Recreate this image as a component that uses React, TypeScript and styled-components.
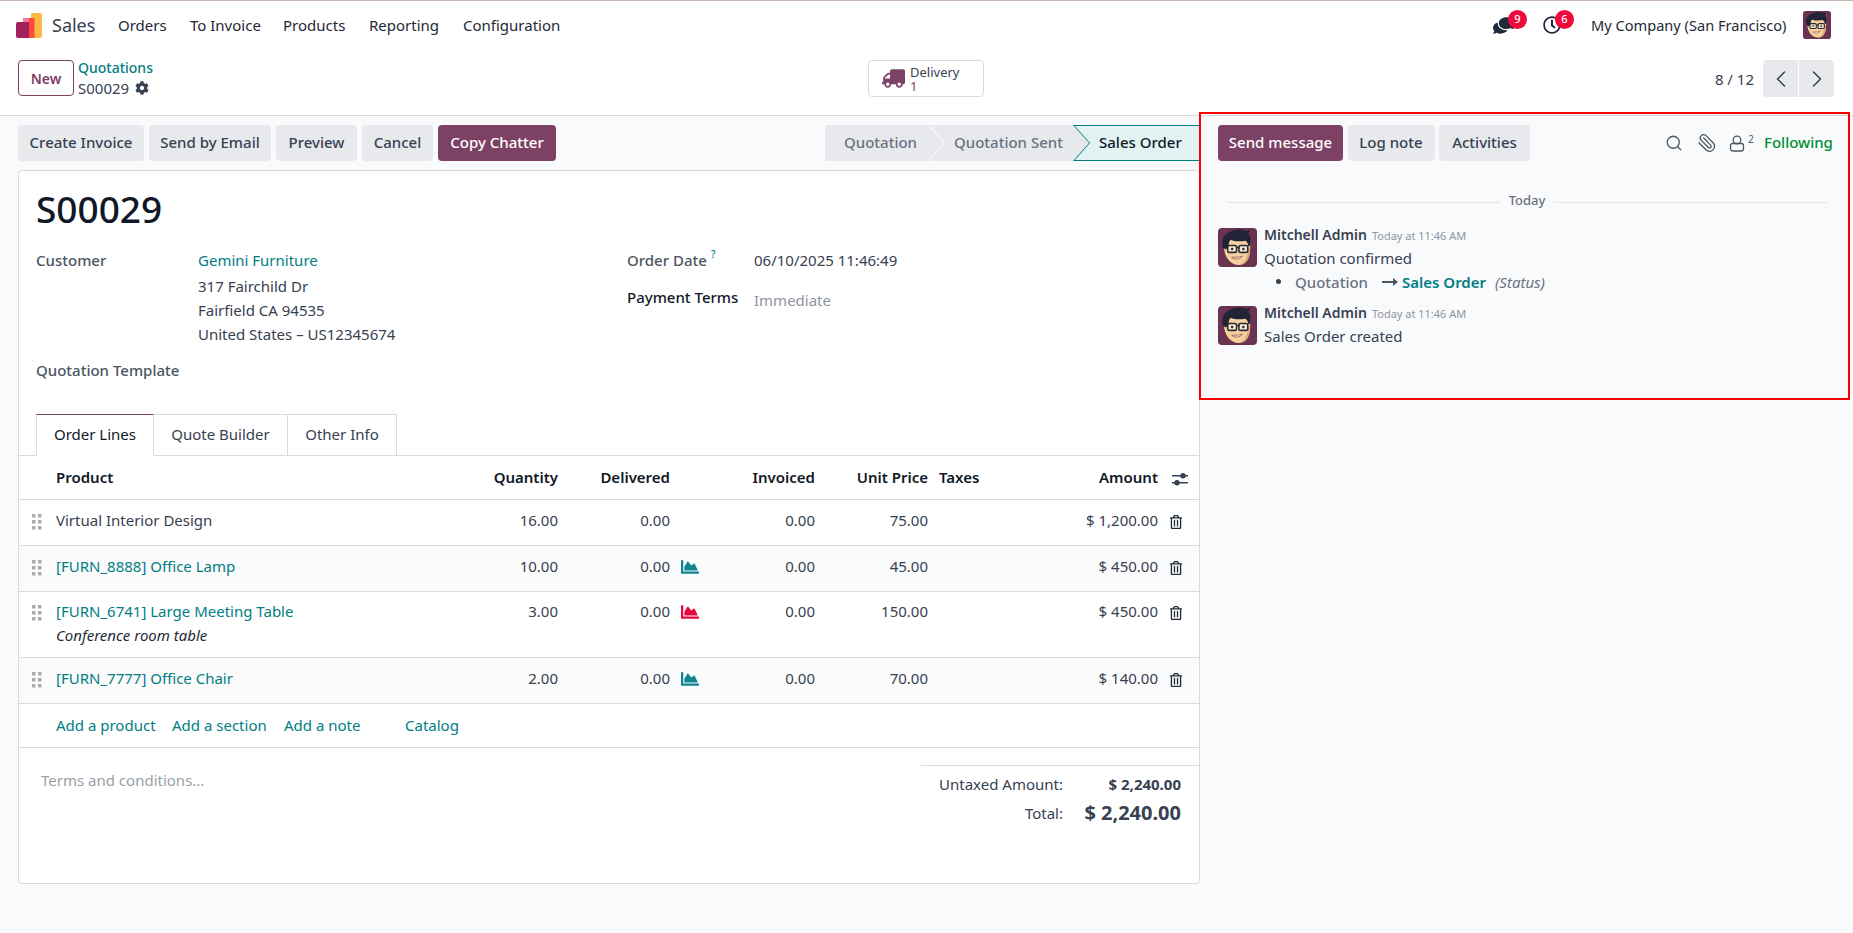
import styled, { createGlobalStyle } from 'styled-components';
import { ChevronLeft, ChevronRight, Paperclip, Search } from 'lucide-react';
import { FaChartArea, FaCog, FaComments, FaRegClock, FaRegTrashAlt, FaTruck } from 'react-icons/fa';

const GlobalStyle = createGlobalStyle`
  html, body {
    margin: 0;
    height: 100%;
    background: #f9fafb;
    color: #374151;
    font-family: "Noto Sans", "Open Sans", sans-serif;
    font-size: 15px;
    line-height: 24px;
    overflow: hidden;
  }
  * { box-sizing: border-box; }
`;

const TEAL = '#017e84';
const PLUM = '#7c4164';

function Logo() {
  return (
    <svg width="26" height="26" viewBox="0 0 26 26">
      <path d="M15 3a2 2 0 0 1 2-2h7a2 2 0 0 1 2 2v21a2 2 0 0 1-2 2h-9z" fill="#fbb945" />
      <path d="M7 8a2 2 0 0 1 2-2h9.500v20H7z" fill="#fc4a3f" />
      <path d="M7 6h6v5H7z" fill="#f8799a" />
      <path d="M0 12a2 2 0 0 1 2-2h11v16H2a2 2 0 0 1-2-2z" fill="#a3205f" />
    </svg>
  );
}

function Face({ size }: { size: number }) {
  return (
    <svg width={size} height={size} viewBox="0 0 40 40" style={{ display: 'block', flex: 'none' }}>
      <rect width="40" height="40" rx="4" fill="#6a3350" />
      <path d="M6 18c0 12 7 20 15 20s12-7 12-17V12H9z" fill="#f6cf9e" />
      <path d="M31 20c0 9-4 17-10 18 8 0 12-7 12-17z" fill="#dfa878" />
      <path d="M5 20C3 12 6 6 12 4c6-3 12-3 16-1l5-1-2 4c3 3 3 8 2 12l-2 1c0-3-1-5-3-6-5 1-11 1-15-1-2 2-2 4-2 7l-3 3z" fill="#232338" />
      <rect x="10" y="18" width="9" height="7" rx="1.500" fill="#f6e8d2" stroke="#2b2b35" strokeWidth="1.600" />
      <rect x="21.500" y="18" width="9" height="7" rx="1.500" fill="#f6e8d2" stroke="#2b2b35" strokeWidth="1.600" />
      <path d="M19 20h3" stroke="#2b2b35" strokeWidth="1.500" />
      <circle cx="14.500" cy="21.500" r="1.300" fill="#2b2b35" />
      <circle cx="26" cy="21.500" r="1.300" fill="#2b2b35" />
      <path d="M14 30c3 2.500 8 2.500 11-1-3 1-8 1-11 1z" fill="#fff" stroke="#8a4b34" strokeWidth=".8" />
    </svg>
  );
}

function DragHandle() {
  return (
    <svg width="10" height="16" viewBox="0 0 10 16" fill="#a9acb2">
      {[0, 6, 12].map((y) => (
        <g key={y}>
          <rect x="0" y={y} width="3.500" height="3.500" />
          <rect x="6" y={y} width="3.500" height="3.500" />
        </g>
      ))}
    </svg>
  );
}

function AdjustIcon() {
  return (
    <svg width="16" height="14" viewBox="0 0 16 14" fill="#374151">
      <rect x="0" y="3" width="16" height="1.500" />
      <rect x="0" y="10" width="16" height="1.500" />
      <circle cx="11" cy="3.700" r="2.700" />
      <circle cx="5" cy="10.700" r="2.700" />
    </svg>
  );
}

function UserOutline() {
  return (
    <svg width="16" height="17" viewBox="0 0 16 17" fill="none" stroke="#4b5563" strokeWidth="1.300">
      <circle cx="8" cy="5" r="3.800" />
      <path d="M3.500 8.500h9a2 2 0 0 1 2 2v3a2.500 2.500 0 0 1-2.500 2.500H4a2.500 2.500 0 0 1-2.500-2.500v-3a2 2 0 0 1 2-2z" />
    </svg>
  );
}

function LongArrow() {
  return (
    <svg width="16" height="8" viewBox="0 0 16 8" fill="#4b5563">
      <path d="M0 3h11V0l5 4-5 4V5H0z" />
    </svg>
  );
}

const Page = styled.div`
  height: 933px;
  display: flex;
  flex-direction: column;
`;

const Navbar = styled.header`
  height: 46px;
  flex: none;
  background: #fff;
  border-top: 1px solid #c9b8ae;
  display: flex;
  align-items: center;
  padding: 3px 22px 0 16px;
`;

const Brand = styled.span`
  font-size: 18px;
  margin-left: 10px;
  width: 66px;
  color: #374151;
`;

const NavItem = styled.span<{ $w: number }>`
  width: ${(p) => p.$w}px;
  color: #1f2937;
  white-space: nowrap;
`;

const NavRight = styled.div`
  margin-left: auto;
  display: flex;
  align-items: center;
`;

const IconBadge = styled.span<{ $w: number }>`
  position: relative;
  width: ${(p) => p.$w}px;
  height: 20px;
  display: flex;
  align-items: center;
  color: #1f2a3a;
`;

const Badge = styled.b<{ $left: number }>`
  position: absolute;
  top: -5px;
  left: ${(p) => p.$left}px;
  width: 19px;
  height: 19px;
  border-radius: 50%;
  background: #ef0a3b;
  color: #fff;
  font-size: 11px;
  font-weight: 500;
  line-height: 18px;
  text-align: center;
`;

const Company = styled.span`
  width: 212px;
  font-size: 14.600px;
  color: #1f2937;
  white-space: nowrap;
`;

const ControlPanel = styled.div`
  height: 70px;
  flex: none;
  background: #fff;
  border-bottom: 1px solid #d8dadd;
  display: grid;
  grid-template-columns: 850px 1fr auto;
  align-items: start;
  padding: 14px 19px 0 18px;
`;

const Crumbs = styled.div`
  display: flex;
  gap: 4px;
`;

const NewButton = styled.button`
  width: 56px;
  height: 36px;
  background: #fff;
  border: 1px solid ${PLUM};
  border-radius: 4px;
  color: ${PLUM};
  font: 600 14px "Noto Sans", sans-serif;
`;

const CrumbText = styled.div`
  line-height: 20px;
  margin-top: -2px;
`;

const CrumbLink = styled.div`
  color: ${TEAL};
  font-size: 14px;
  font-weight: 500;
`;

const CrumbCurrent = styled.div`
  display: flex;
  align-items: center;
  gap: 6px;
`;

const DeliveryButton = styled.div`
  width: 116px;
  height: 37px;
  border: 1px solid #d8dadd;
  border-radius: 4px;
  display: flex;
  align-items: center;
  gap: 5px;
  padding-left: 13px;
  font-size: 13px;
  line-height: 14px;
  color: #374151;

  svg {
    flex: none;
    transform: scaleX(-1);
    color: ${PLUM};
  }
`;

const PlumText = styled.div`
  color: ${PLUM};
`;

const Pager = styled.div`
  display: flex;
  align-items: center;
  height: 37px;
  gap: 9px;
`;

const PagerButtons = styled.div`
  display: flex;
  gap: 1px;
`;

const PagerButton = styled.span<{ $side: 'left' | 'right' }>`
  width: 35px;
  height: 37px;
  background: #e7e9ed;
  display: flex;
  align-items: center;
  justify-content: center;
  border-radius: ${(p) => (p.$side === 'left' ? '4px 0 0 4px' : '0 4px 4px 0')};
`;

const Main = styled.div`
  flex: 1;
  display: flex;
  min-height: 0;
`;

const FormColumn = styled.div`
  width: 1200px;
  flex: none;
  padding: 9px 0 0 18px;
`;

const ActionRow = styled.div`
  height: 36px;
  display: flex;
  justify-content: space-between;
`;

const ButtonGroup = styled.div<{ $columns: string; $gap: number }>`
  display: grid;
  grid-template-columns: ${(p) => p.$columns};
  gap: ${(p) => p.$gap}px;
`;

const ActionButton = styled.button<{ $primary?: boolean }>`
  height: 36px;
  border: 0;
  padding: 0 0 2px;
  border-radius: 4px;
  background: ${(p) => (p.$primary ? PLUM : '#e7e9ed')};
  color: ${(p) => (p.$primary ? '#fff' : '#374151')};
  font: 500 15px "Noto Sans", sans-serif;
  white-space: nowrap;
`;

const StatusBar = styled.div`
  display: grid;
  grid-template-columns: 103px 145px 127px;
  height: 36px;
`;

const Stage = styled.div<{ $active?: boolean; $edge?: string; $first?: boolean }>`
  position: relative;
  padding-left: ${(p) => (p.$first ? 19 : 26)}px;
  background: ${(p) => (p.$active ? '#e1f3f3' : '#e7e9ed')};
  color: ${(p) => (p.$active ? '#111827' : '#6b7280')};
  font-weight: 500;
  line-height: ${(p) => (p.$active ? 33 : 34)}px;
  white-space: nowrap;
  border: ${(p) => (p.$active ? `1px solid ${TEAL}` : '0')};
  border-left: 0;

  ${(p) =>
    p.$edge &&
    `
    &::before, &::after {
      content: '';
      position: absolute;
      top: 0;
      width: 16px;
      height: 36px;
      clip-path: polygon(0 0, 100% 50%, 0 100%);
      z-index: 1;
    }
    &::before { left: calc(100% + 1px); background: ${p.$edge}; }
    &::after { left: 100%; background: #e7e9ed; }
  `}
`;

const Sheet = styled.section`
  margin-top: 9px;
  height: 714px;
  background: #fff;
  border: 1px solid #d8dadd;
  border-radius: 4px;
  display: flex;
  flex-direction: column;
`;

const Title = styled.h1`
  margin: 14px 0 0 17px;
  font-size: 37px;
  font-weight: 500;
  line-height: 48px;
  color: #111827;
`;

const FormGrid = styled.div`
  display: grid;
  grid-template-columns: 591px 1fr;
  margin: 15px 0 0 17px;
  height: 166px;
`;

const FieldRow = styled.div<{ $gap?: number; $label: number }>`
  display: grid;
  grid-template-columns: ${(p) => p.$label}px 1fr;
  margin-bottom: ${(p) => p.$gap ?? 0}px;
`;

const Label = styled.div<{ $strong?: boolean }>`
  font-weight: 500;
  color: ${(p) => (p.$strong ? '#111827' : '#4b5563')};
  white-space: nowrap;
`;

const Help = styled.sup`
  position: relative;
  top: -2px;
  color: ${TEAL};
  font-size: 10px;
  line-height: 0;
  margin-left: 4px;
`;

const PartnerLine = styled.div`
  margin-bottom: 2px;
`;

const TextLink = styled.a`
  color: ${TEAL};
  text-decoration: none;
`;

const Muted = styled.span`
  color: #8f959e;
  padding-top: 3px;
`;

const Tabs = styled.div`
  display: grid;
  grid-template-columns: 118px 134px 109px 1fr;
  height: 42px;
  padding-left: 17px;
  position: relative;
  flex: none;
  border-bottom: 1px solid #d8dadd;
`;

const Tab = styled.div<{ $active?: boolean }>`
  height: 42px;
  line-height: 38px;
  text-align: center;
  border: 1px solid #d8dadd;
  border-left-width: ${(p) => (p.$active ? 1 : 0)}px;
  border-top-color: ${(p) => (p.$active ? PLUM : '#d8dadd')};
  border-bottom-color: ${(p) => (p.$active ? '#fff' : '#d8dadd')};
  color: ${(p) => (p.$active ? '#111827' : '#374151')};
`;

const LINE_COLUMNS = '37px 400px 102px 112px 30px 115px 113px 130px 100px 41px';

const LineRow = styled.div<{ $height: number; $alt?: boolean; $top: number }>`
  display: grid;
  grid-template-columns: ${LINE_COLUMNS};
  height: ${(p) => p.$height}px;
  flex: none;
  padding-top: ${(p) => p.$top}px;
  background: ${(p) => (p.$alt ? '#fbfbfb' : '#fff')};
  border-bottom: 1px solid #d8dadd;
`;

const HeaderCell = styled.div<{ $right?: boolean; $pad?: number }>`
  font-weight: 600;
  color: #111827;
  text-align: ${(p) => (p.$right ? 'right' : 'left')};
  padding-left: ${(p) => p.$pad ?? 0}px;
  white-space: nowrap;
`;

const Cell = styled.div<{ $right?: boolean }>`
  text-align: ${(p) => (p.$right ? 'right' : 'left')};
  color: #374151;
  white-space: nowrap;
`;

const HandleCell = styled.div`
  padding: 4px 0 0 13px;
`;

const IconCell = styled.div<{ $pad: number; $top?: number }>`
  padding: ${(p) => p.$top ?? 4}px 0 0 ${(p) => p.$pad}px;
  color: #1f2937;
`;

const Note = styled.div`
  font-style: italic;
  color: #1f2937;
`;

const AddRow = styled.div`
  height: 44px;
  flex: none;
  display: grid;
  grid-template-columns: 116px 112px 121px auto;
  align-items: center;
  padding: 0 0 1px 37px;
  border-bottom: 1px solid #d8dadd;
`;

const Footer = styled.div`
  display: flex;
  justify-content: space-between;
  padding: 17px 0 0 22px;
`;

const Terms = styled.div`
  color: #9a9fa7;
  padding-top: 3px;
`;

const Totals = styled.div`
  width: 278px;
  border-top: 1px solid #d8dadd;
  padding: 3px 18px 0 0;
  display: grid;
  grid-template-columns: 1fr 118px;
  grid-auto-rows: 29px;
  align-items: center;
  text-align: right;
`;

const TotalValue = styled.b<{ $big?: boolean }>`
  font-size: ${(p) => (p.$big ? 20 : 15)}px;
  font-weight: 700;
`;

const Chatter = styled.aside`
  position: relative;
  flex: 1;
  padding: 9px 19px 0 18px;
`;

const RedFrame = styled.div`
  position: absolute;
  top: -4px;
  left: -1px;
  width: 651px;
  height: 288px;
  border: 2px solid #f00;
  pointer-events: none;
`;

const ChatterTools = styled.div`
  display: flex;
  align-items: center;
  color: #4b5563;
`;

const ToolSlot = styled.span<{ $w: number }>`
  width: ${(p) => p.$w}px;
  display: flex;
  align-items: center;
`;

const Following = styled.span`
  width: 70px;
  padding-bottom: 2px;
  color: #008f36;
  font-weight: 500;
  white-space: nowrap;
`;

const Sup = styled.sup`
  font-size: 10px;
  line-height: 0;
  margin: -8px 0 0 3px;
`;

const DayDivider = styled.div`
  display: flex;
  align-items: center;
  gap: 9px;
  margin: 27px 7px 0 9px;
  height: 24px;
  font-size: 13px;
  font-weight: 500;
  color: #6b7280;

  &::before, &::after {
    content: '';
    flex: 1;
    height: 1px;
    background: #e3e5e8;
    margin-top: 4px;
  }
`;

const Message = styled.article<{ $top: number }>`
  display: flex;
  gap: 7px;
  margin-top: ${(p) => p.$top}px;
`;

const MessageBody = styled.div`
  margin-top: -5px;
`;

const Author = styled.div`
  display: flex;
  align-items: baseline;
  height: 23px;
  gap: 5px;
  font-size: 14px;
  font-weight: 600;
  color: #374151;
`;

const Time = styled.span`
  font-size: 11px;
  font-weight: 400;
  color: #8f959e;
`;

const ChangeList = styled.ul`
  margin: 0;
  padding: 0 0 0 31px;
  list-style: none;
`;

const ChangeItem = styled.li`
  display: flex;
  align-items: center;
  height: 23px;
  position: relative;

  &::before {
    content: '';
    position: absolute;
    left: -19px;
    top: 9px;
    width: 5px;
    height: 5px;
    border-radius: 50%;
    background: #374151;
  }
`;

const OldValue = styled.span`
  width: 87px;
  font-weight: 500;
  color: #6b7280;
`;

const NewValue = styled.span`
  margin: 0 0 0 4px;
  width: 93px;
  font-weight: 600;
  color: ${TEAL};
  white-space: nowrap;
`;

const FieldName = styled.i`
  color: #6b7280;
`;

const lines = [
  { name: 'Virtual Interior Design', plain: true, qty: '16.00', price: '75.00', amount: '$ 1,200.00', h: 46, top: 8 },
  { name: '[FURN_8888] Office Lamp', qty: '10.00', price: '45.00', amount: '$ 450.00', h: 46, alt: true, chart: '#0e8590', top: 8 },
  { name: '[FURN_6741] Large Meeting Table', note: 'Conference room table', qty: '3.00', price: '150.00', amount: '$ 450.00', h: 66, chart: '#e8063c', top: 7 },
  { name: '[FURN_7777] Office Chair', qty: '2.00', price: '70.00', amount: '$ 140.00', h: 46, alt: true, chart: '#0e8590', top: 8 },
];

export default function App() {
  return (
    <Page>
      <GlobalStyle />
      <Navbar>
        <Logo />
        <Brand>Sales</Brand>
        <NavItem $w={72}>Orders</NavItem>
        <NavItem $w={93}>To Invoice</NavItem>
        <NavItem $w={86}>Products</NavItem>
        <NavItem $w={94}>Reporting</NavItem>
        <NavItem $w={100}>Configuration</NavItem>
        <NavRight>
          <IconBadge $w={50}>
            <FaComments size={21} style={{ transform: 'scaleX(-1)' }} />
            <Badge $left={15}>9</Badge>
          </IconBadge>
          <IconBadge $w={48}>
            <FaRegClock size={18} />
            <Badge $left={12}>6</Badge>
          </IconBadge>
          <Company>My Company (San Francisco)</Company>
          <Face size={28} />
        </NavRight>
      </Navbar>

      <ControlPanel>
        <Crumbs>
          <NewButton>New</NewButton>
          <CrumbText>
            <CrumbLink>Quotations</CrumbLink>
            <CrumbCurrent>
              S00029 <FaCog size={14} />
            </CrumbCurrent>
          </CrumbText>
        </Crumbs>
        <DeliveryButton>
          <FaTruck size={23} />
          <div>
            Delivery
            <PlumText>1</PlumText>
          </div>
        </DeliveryButton>
        <Pager>
          8 / 12
          <PagerButtons>
            <PagerButton $side="left">
              <ChevronLeft size={28} strokeWidth={1.3} />
            </PagerButton>
            <PagerButton $side="right">
              <ChevronRight size={28} strokeWidth={1.3} />
            </PagerButton>
          </PagerButtons>
        </Pager>
      </ControlPanel>

      <Main>
        <FormColumn>
          <ActionRow>
            <ButtonGroup $columns="126px 122px 81px 71px 118px" $gap={5}>
              <ActionButton>Create Invoice</ActionButton>
              <ActionButton>Send by Email</ActionButton>
              <ActionButton>Preview</ActionButton>
              <ActionButton>Cancel</ActionButton>
              <ActionButton $primary>Copy Chatter</ActionButton>
            </ButtonGroup>
            <StatusBar>
              <Stage $first $edge="#fff">Quotation</Stage>
              <Stage $edge={TEAL}>Quotation Sent</Stage>
              <Stage $active>Sales Order</Stage>
            </StatusBar>
          </ActionRow>

          <Sheet>
            <Title>S00029</Title>
            <FormGrid>
              <div>
                <FieldRow $label={162} $gap={12}>
                  <Label>Customer</Label>
                  <div>
                    <PartnerLine>
                      <TextLink>Gemini Furniture</TextLink>
                    </PartnerLine>
                    <div>317 Fairchild Dr</div>
                    <div>Fairfield CA 94535</div>
                    <div>United States – US12345674</div>
                  </div>
                </FieldRow>
                <FieldRow $label={162}>
                  <Label>Quotation Template</Label>
                </FieldRow>
              </div>
              <div>
                <FieldRow $label={127} $gap={13}>
                  <Label>
                    Order Date<Help>?</Help>
                  </Label>
                  <div>06/10/2025 11:46:49</div>
                </FieldRow>
                <FieldRow $label={127}>
                  <Label $strong>Payment Terms</Label>
                  <Muted>Immediate</Muted>
                </FieldRow>
              </div>
            </FormGrid>

            <Tabs>
              <Tab $active>Order Lines</Tab>
              <Tab>Quote Builder</Tab>
              <Tab>Other Info</Tab>
            </Tabs>

            <LineRow $height={44} $top={9}>
              <div />
              <HeaderCell>Product</HeaderCell>
              <HeaderCell $right>Quantity</HeaderCell>
              <HeaderCell $right>Delivered</HeaderCell>
              <div />
              <HeaderCell $right>Invoiced</HeaderCell>
              <HeaderCell $right>Unit Price</HeaderCell>
              <HeaderCell $pad={11}>Taxes</HeaderCell>
              <HeaderCell $right>Amount</HeaderCell>
              <IconCell $pad={14} $top={3}>
                <AdjustIcon />
              </IconCell>
            </LineRow>

            {lines.map((line) => (
              <LineRow key={line.name} $height={line.h} $alt={line.alt} $top={line.top}>
                <HandleCell>
                  <DragHandle />
                </HandleCell>
                <div>
                  {line.plain ? <Cell>{line.name}</Cell> : <TextLink>{line.name}</TextLink>}
                  {line.note && <Note>{line.note}</Note>}
                </div>
                <Cell $right>{line.qty}</Cell>
                <Cell $right>0.00</Cell>
                <IconCell $pad={11}>
                  {line.chart && <FaChartArea size={18} color={line.chart} />}
                </IconCell>
                <Cell $right>0.00</Cell>
                <Cell $right>{line.price}</Cell>
                <div />
                <Cell $right>{line.amount}</Cell>
                <IconCell $pad={11} $top={3}>
                  <FaRegTrashAlt size={14} />
                </IconCell>
              </LineRow>
            ))}

            <AddRow>
              <TextLink>Add a product</TextLink>
              <TextLink>Add a section</TextLink>
              <TextLink>Add a note</TextLink>
              <TextLink>Catalog</TextLink>
            </AddRow>

            <Footer>
              <Terms>Terms and conditions...</Terms>
              <Totals>
                <span>Untaxed Amount:</span>
                <TotalValue>$ 2,240.00</TotalValue>
                <span>Total:</span>
                <TotalValue $big>$ 2,240.00</TotalValue>
              </Totals>
            </Footer>
          </Sheet>
        </FormColumn>

        <Chatter>
          <ActionRow>
            <ButtonGroup $columns="125px 87px 91px" $gap={4.5}>
              <ActionButton $primary>Send message</ActionButton>
              <ActionButton>Log note</ActionButton>
              <ActionButton>Activities</ActionButton>
            </ButtonGroup>
            <ChatterTools>
              <ToolSlot $w={32}>
                <Search size={18} strokeWidth={1.7} />
              </ToolSlot>
              <ToolSlot $w={32}>
                <Paperclip size={20} strokeWidth={1.6} style={{ transform: 'scaleX(-1)' }} />
              </ToolSlot>
              <ToolSlot $w={35}>
                <UserOutline />
                <Sup>2</Sup>
              </ToolSlot>
              <Following>Following</Following>
            </ChatterTools>
          </ActionRow>

          <DayDivider>Today</DayDivider>

          <Message $top={16}>
            <Face size={39} />
            <MessageBody>
              <Author>
                Mitchell Admin <Time>Today at 11:46 AM</Time>
              </Author>
              <div>Quotation confirmed</div>
              <ChangeList>
                <ChangeItem>
                  <OldValue>Quotation</OldValue>
                  <LongArrow />
                  <NewValue>Sales Order</NewValue>
                  <FieldName>(Status)</FieldName>
                </ChangeItem>
              </ChangeList>
            </MessageBody>
          </Message>

          <Message $top={13}>
            <Face size={39} />
            <MessageBody>
              <Author>
                Mitchell Admin <Time>Today at 11:46 AM</Time>
              </Author>
              <div>Sales Order created</div>
            </MessageBody>
          </Message>

          <RedFrame />
        </Chatter>
      </Main>
    </Page>
  );
}
